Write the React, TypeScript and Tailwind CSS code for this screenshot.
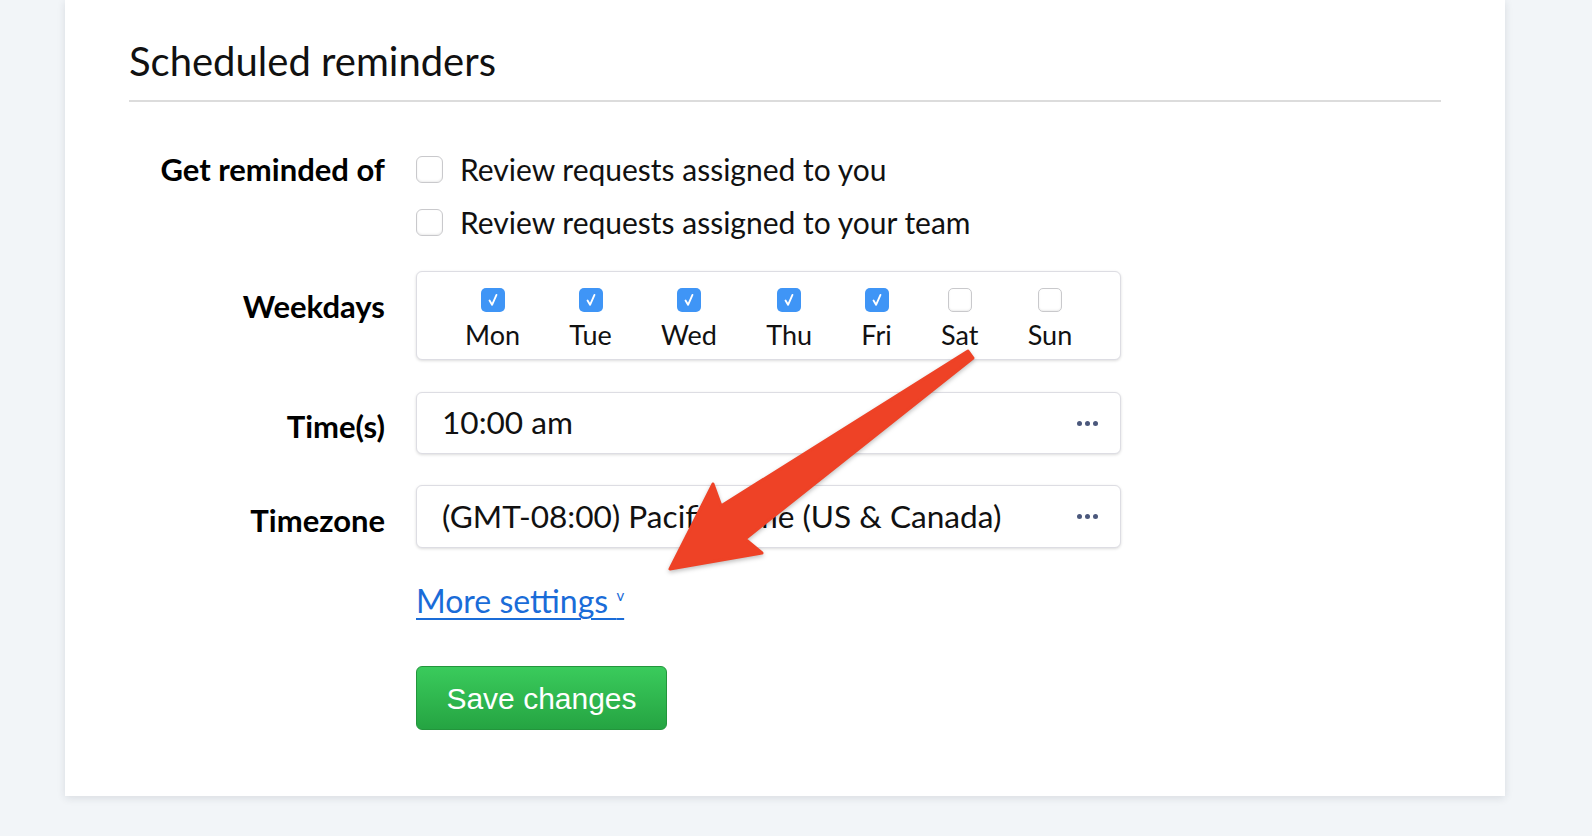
import React from "react";

const days = [
  { name: "Mon", on: true },
  { name: "Tue", on: true },
  { name: "Wed", on: true },
  { name: "Thu", on: true },
  { name: "Fri", on: true },
  { name: "Sat", on: false },
  { name: "Sun", on: false },
];

function Box({ checked, size = "big" }: { checked?: boolean; size?: "big" | "small" }) {
  const dims = size === "big" ? "h-[27px] w-[27px] rounded-[6px]" : "h-[24px] w-[24px] rounded-[5px]";
  if (checked) {
    return (
      <span className={`${dims} flex items-center justify-center bg-[#3f95f6]`}>
        <svg viewBox="0 0 12 12" className="h-[16px] w-[16px]" fill="none">
          <path d="M3.4 6.4 L5.3 9.6 L8.6 2.2" stroke="#fff" strokeWidth="1.4" strokeLinecap="round" strokeLinejoin="round" />
        </svg>
      </span>
    );
  }
  return <span className={`${dims} block border border-[#c9c9cc] bg-white shadow-[inset_0_-1px_2px_rgba(0,0,0,0.08)]`} />;
}

function Dots() {
  return (
    <span className="flex gap-[3px]">
      <span className="h-[5px] w-[5px] rounded-full bg-[#4b587c]" />
      <span className="h-[5px] w-[5px] rounded-full bg-[#4b587c]" />
      <span className="h-[5px] w-[5px] rounded-full bg-[#4b587c]" />
    </span>
  );
}

function Label({ children }: { children: React.ReactNode }) {
  return <div className="text-right text-[31px] font-bold leading-[32px] text-black">{children}</div>;
}

export default function App() {
  return (
    <div className="relative h-[836px] w-[1592px] overflow-hidden bg-[#f2f5f8] font-['Lato',sans-serif]">
      {/* Card */}
      <div className="ml-[65px] h-[796px] w-[1440px] bg-white px-[64px] pt-[38px] shadow-[0_2px_8px_rgba(30,40,60,0.12)]">
        <h2 className="border-b-2 border-[#dcdcdc] pb-[16px] text-[40px] leading-[46px] text-[#111]">
          Scheduled reminders
        </h2>

        <div className="mt-[47px] grid grid-cols-[256px_1fr] gap-x-[31px]">
          {/* Get reminded of */}
          <div className="flex h-[40px] items-center justify-end">
            <Label>Get reminded of</Label>
          </div>
          <div className="flex flex-col gap-[13px]">
            <div className="flex h-[40px] items-center gap-[17px]">
              <Box />
              <span className="text-[30px] leading-none text-[#111]">Review requests assigned to you</span>
            </div>
            <div className="flex h-[40px] items-center gap-[17px]">
              <Box />
              <span className="text-[30px] leading-none text-[#111]">Review requests assigned to your team</span>
            </div>
          </div>

          {/* Weekdays */}
          <div className="mt-[29px] pt-[19px]">
            <Label>Weekdays</Label>
          </div>
          <div className="mt-[29px] flex h-[89px] w-[705px] gap-[49.3px] rounded-[6px] border border-[#dddde3] bg-white pl-[48px] pt-[16px] shadow-[0_1px_3px_rgba(0,0,0,0.14)]">
            {days.map((d) => (
              <div key={d.name} className="flex flex-col items-center gap-[7px]">
                <Box checked={d.on} size="small" />
                <span className="text-[27px] leading-[31px] text-[#111]">{d.name}</span>
              </div>
            ))}
          </div>

          {/* Time(s) */}
          <div className="mt-[32px] flex h-[62px] items-center justify-end pt-[6px]">
            <Label>Time(s)</Label>
          </div>
          <div className="mt-[32px] flex h-[62px] w-[705px] items-center justify-between rounded-[6px] border border-[#dddde3] bg-white pl-[25px] pr-[22px] shadow-[0_1px_3px_rgba(0,0,0,0.14)]">
            <span className="text-[31.6px] leading-none text-[#111]">10:00 am</span>
            <Dots />
          </div>

          {/* Timezone */}
          <div className="mt-[31px] flex h-[63px] items-center justify-end pt-[6px]">
            <Label>Timezone</Label>
          </div>
          <div className="mt-[31px] flex h-[63px] w-[705px] items-center justify-between rounded-[6px] border border-[#dddde3] bg-white pl-[25px] pr-[22px] shadow-[0_1px_3px_rgba(0,0,0,0.14)]">
            <span className="text-[31.6px] leading-none text-[#111]">(GMT-08:00) Pacific Time (US &amp; Canada)</span>
            <Dots />
          </div>

          {/* More settings */}
          <div />
          <div className="mt-[37px] h-[32px]">
            <a className="text-[32px] leading-[32px] text-[#1a6cd8] underline decoration-2 underline-offset-[5px]" href="#">
              More settings <span className="relative top-[-12px] text-[15px]">v</span>
            </a>
          </div>

          {/* Save */}
          <div />
          <div className="mt-[49px]">
            <button className="h-[64px] w-[251px] rounded-[6px] border border-[#23953c] bg-gradient-to-b from-[#3acb5c] to-[#25a442] font-['Liberation_Sans',Arial,sans-serif] text-[30px] text-white">
              Save changes
            </button>
          </div>
        </div>
      </div>

      {/* Annotation arrow */}
      <svg
        className="pointer-events-none absolute left-0 top-0"
        width="1592"
        height="836"
        viewBox="0 0 1592 836"
        style={{ filter: "drop-shadow(0 2px 2px rgba(0,0,0,0.25))" }}
      >
        <polygon
          points="968,351 721,506 713,484 670,569 762,553 745,539 973,358"
          fill="#ee4226"
          stroke="#ee4226"
          strokeWidth="3"
          strokeLinejoin="round"
        />
      </svg>
    </div>
  );
}
